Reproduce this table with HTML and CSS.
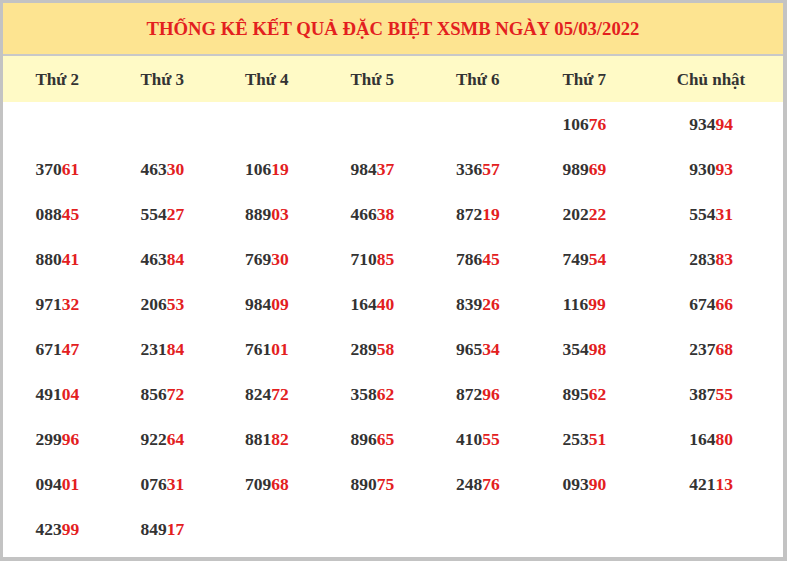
FILE: index.html
```html
<!DOCTYPE html>
<html lang="vi">
<head>
<meta charset="utf-8">
<link rel="stylesheet" href="styles.css">
</head>
<body>
<div class="frame">
<table class="stats">
<colgroup>
<col class="c"><col class="c"><col class="c"><col class="c"><col class="c"><col class="c"><col class="c-last">
</colgroup>
<thead>
<tr><th class="title" colspan="7">THỐNG KÊ KẾT QUẢ ĐẶC BIỆT XSMB NGÀY 05/03/2022</th></tr>
<tr class="days"><th>Thứ 2</th><th>Thứ 3</th><th>Thứ 4</th><th>Thứ 5</th><th>Thứ 6</th><th>Thứ 7</th><th>Chủ nhật</th></tr>
</thead>
<tbody>
<tr><td></td><td></td><td></td><td></td><td></td><td>106<b>76</b></td><td>934<b>94</b></td></tr>
<tr><td>370<b>61</b></td><td>463<b>30</b></td><td>106<b>19</b></td><td>984<b>37</b></td><td>336<b>57</b></td><td>989<b>69</b></td><td>930<b>93</b></td></tr>
<tr><td>088<b>45</b></td><td>554<b>27</b></td><td>889<b>03</b></td><td>466<b>38</b></td><td>872<b>19</b></td><td>202<b>22</b></td><td>554<b>31</b></td></tr>
<tr><td>880<b>41</b></td><td>463<b>84</b></td><td>769<b>30</b></td><td>710<b>85</b></td><td>786<b>45</b></td><td>749<b>54</b></td><td>283<b>83</b></td></tr>
<tr><td>971<b>32</b></td><td>206<b>53</b></td><td>984<b>09</b></td><td>164<b>40</b></td><td>839<b>26</b></td><td>116<b>99</b></td><td>674<b>66</b></td></tr>
<tr><td>671<b>47</b></td><td>231<b>84</b></td><td>761<b>01</b></td><td>289<b>58</b></td><td>965<b>34</b></td><td>354<b>98</b></td><td>237<b>68</b></td></tr>
<tr><td>491<b>04</b></td><td>856<b>72</b></td><td>824<b>72</b></td><td>358<b>62</b></td><td>872<b>96</b></td><td>895<b>62</b></td><td>387<b>55</b></td></tr>
<tr><td>299<b>96</b></td><td>922<b>64</b></td><td>881<b>82</b></td><td>896<b>65</b></td><td>410<b>55</b></td><td>253<b>51</b></td><td>164<b>80</b></td></tr>
<tr><td>094<b>01</b></td><td>076<b>31</b></td><td>709<b>68</b></td><td>890<b>75</b></td><td>248<b>76</b></td><td>093<b>90</b></td><td>421<b>13</b></td></tr>
<tr><td>423<b>99</b></td><td>849<b>17</b></td><td></td><td></td><td></td><td></td><td></td></tr>
</tbody>
</table>
</div>
</body>
</html>
```
FILE: styles.css
```css
html, body {
  margin: 0;
  padding: 0;
  background: #ffffff;
}
.frame {
  width: 787px;
  height: 561px;
  box-sizing: border-box;
  border: 3px solid #c3c3c3;
  border-right-width: 4px;
  border-bottom-width: 4px;
  background: #ffffff;
  overflow: hidden;
}
.stats {
  width: 780px;
  border-collapse: separate;
  border-spacing: 0;
  table-layout: fixed;
  font-family: "Liberation Serif", "Times New Roman", serif;
  font-weight: bold;
  color: #333333;
}
.stats col.c {
  width: 105.5px;
}
.stats col.c-last {
  width: 147px;
}
.stats th,
.stats td {
  padding: 0;
  text-align: center;
  vertical-align: top;
}
.title {
  padding-top: 7px;
  line-height: 51px;
  background: #fde491;
  color: #e3201e;
  font-size: 18.7px;
  border-bottom: 2px solid #c8c8c8;
}
.days th {
  padding-top: 1px;
  line-height: 45px;
  background: #fffac6;
  font-size: 17px;
  color: #333333;
}
.stats td {
  line-height: 45px;
  font-size: 17.5px;
}
.days th:first-child,
.stats td:first-child,
.days th:last-child,
.stats td:last-child {
  padding-left: 3px;
}
.days th:nth-child(2),
.stats td:nth-child(2),
.days th:nth-child(6),
.stats td:nth-child(6) {
  padding-left: 2px;
}
.stats td b {
  color: #e3201e;
}
```
